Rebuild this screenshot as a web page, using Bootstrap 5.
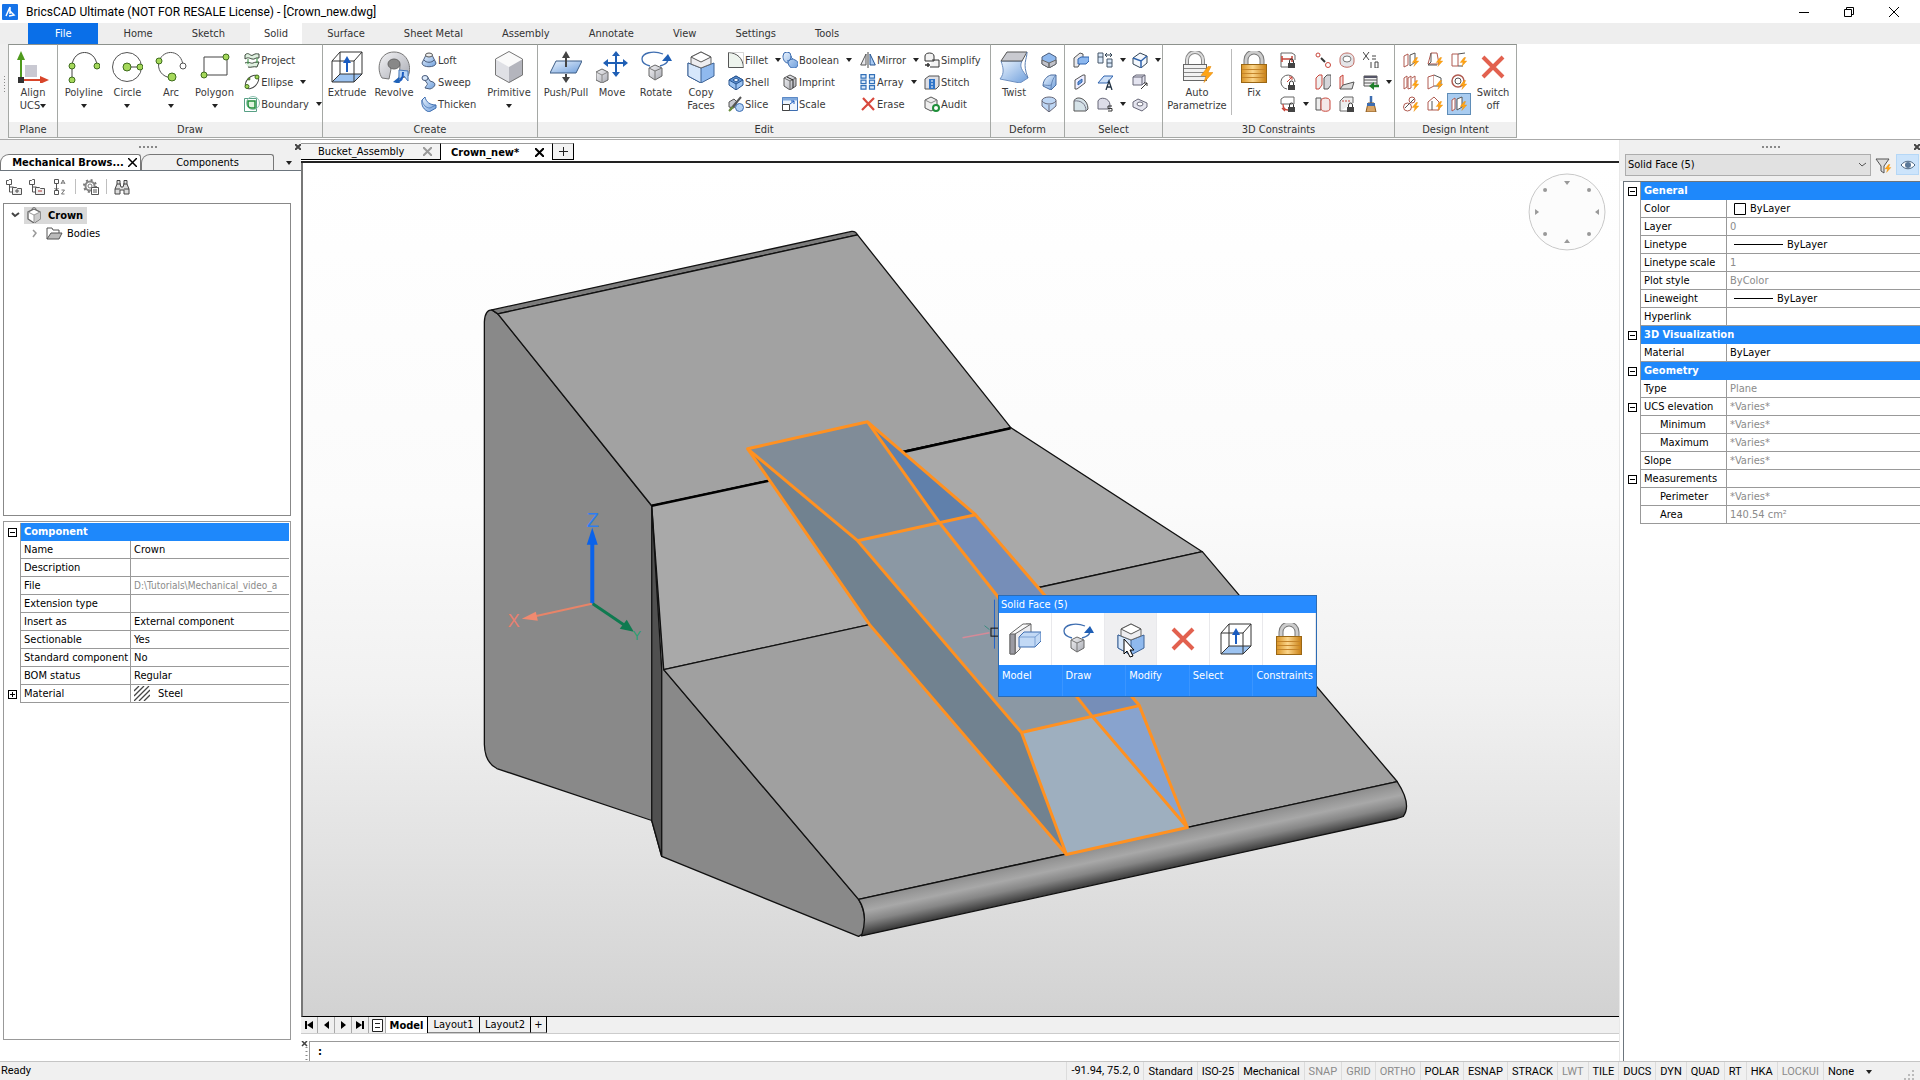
<!DOCTYPE html>
<html lang="en">
<head>
<meta charset="utf-8">
<meta name="viewport" content="width=device-width, initial-scale=1">
<title>BricsCAD Ultimate - Crown_new.dwg</title>
<link href="https://cdn.jsdelivr.net/npm/bootstrap@5.3.0/dist/css/bootstrap.min.css" rel="stylesheet">
<style>
:root{--ui:#f0f0f0;--accent:#1e88fb}
body{font-family:"DejaVu Sans Condensed","DejaVu Sans",sans-serif;font-size:11px;line-height:13px;color:#000;background:#fff}
svg{display:block;flex:none}
button,input,select{font:inherit;color:inherit}
.plain{border:0;background:none;padding:0}
.titlebar{height:23px;padding-left:2px;font-family:Roboto,"Noto Sans",sans-serif;font-size:12px;line-height:16px}
.winbtn{width:45px;height:22px}
.ribbon-tabs{height:21px;background:#eee;padding-left:28px;color:#333;gap:11px}
.ribbon-tab{padding:0 14px;color:#333;text-decoration:none;line-height:21px}
.ribbon-tab.active{background:#fff}
.ribbon-tab.filetab{padding:0 27px;background:#0a6fe8;color:#fff}
.ribbon-wrap{height:96px;background:#fff;border-bottom:1px solid #aaa;padding-left:8px;position:relative}
.ribbon-grip{left:0;top:0;bottom:0;width:8px;background:var(--ui)}
.rgroup{height:94px;border:1px solid #a5a8a5;border-top-color:#8d928d;border-left-width:0}
.rgroup:first-of-type{border-left-width:1px}
.rbody{flex:1;padding-top:4px;color:#3a3a3a}
.rlabel{height:15px;line-height:15px;background:var(--ui);text-align:center;color:#333}
.big{width:44px;display:flex;flex-direction:column;align-items:center;white-space:nowrap;padding-top:2px}
.big svg{width:32px;height:32px;margin-bottom:3px}
.caret{display:inline-block;width:0;height:0;border:3px solid transparent;border-top:4px solid #222;border-bottom:0;vertical-align:middle}
.big .caret{margin-top:5px}
.small-btn{height:22px;display:flex;align-items:center;gap:1px;white-space:nowrap;padding:0}
.small-btn .caret{margin-left:6px}
.small-btn svg,.ico svg{width:16px;height:16px}
.ico{width:24px;height:22px;display:flex;align-items:center;justify-content:center}
.ico.on{background:#a9ccf0;border:1px solid #5f8db8}
.cw{width:11px;height:22px;display:flex;align-items:center;justify-content:center}
.vsep{width:1px;height:66px;background:#bbb}
.w46{width:46px}.w48{width:48px}.w58{width:58px}.w60{width:60px}
.leftpane{width:301px;background:#fff}
.rightpane{width:301px;background:#fff;border-left:1px solid #e8e8e8}
.panehead{background:var(--ui)}
.grip{width:18px;height:2px;background:repeating-linear-gradient(90deg,#888 0 2px,transparent 2px 4px)}
.xmark{width:6px;height:6px}
.ptab{height:17px;border:1px solid #777;border-bottom:0;border-radius:9px 3px 0 0;line-height:16px;text-align:center;white-space:nowrap}
.ptools{height:33px;padding:0 0 1px 6px;gap:7px}
.tree{height:313px;border:1px solid #888;margin:0 10px 0 3px;padding-top:2px}
.treesel{background:#d9d9d9;padding:0 4px 0 2px;height:17px;gap:6px}
.propbox{flex:1;border:1px solid #999;margin:5px 10px 21px 3px;padding:1px 1px 0 0}
.proptable{table-layout:fixed;width:100%;border-collapse:separate;border-spacing:0}
.proptable td,.proptable th{height:18px;padding:0 0 0 3px;font-weight:400;border-bottom:1px solid #999;line-height:17px;white-space:nowrap;overflow:hidden}
.proptable td{border-left:1px solid #999}
.proptable .gut{padding:0 0 0 4px;border:0;border-right:1px solid #999}
.proptable .sec{background:var(--accent);color:#fff;font-weight:700;border-color:var(--accent)}
.proptable .sub{padding-left:19px}
.proptable .pathval{font-size:10px}
.dim{color:#8b8b8b}
.tog{width:9px;height:9px;border:1px solid #000;background:linear-gradient(#000,#000) center/5px 1px no-repeat;padding:0;display:block}
.tog.plus{background:linear-gradient(#000,#000) center/5px 1px no-repeat,linear-gradient(#000,#000) center/1px 5px no-repeat}
.doctabs{height:23px;padding:3px 0 1px;border-bottom:2px solid #222}
.doctab{border:1px solid #000;border-left:0;border-top-color:#999;background:#f3f3f3;line-height:15px;height:17px}
.viewport{flex:1;min-height:0;border-left:2px solid #777;border-bottom:1px solid #000;background:linear-gradient(#fff,#fbfbfb 40%,#f1f1f1 62%,#e1e1e1 82%,#d2d2d2);overflow:hidden}
.popup{left:695px;top:432px;width:319px;background:#278bff;border:1px solid #2c6cb5;color:#fff}
.popup .head{height:17px;line-height:17px;padding-left:2px}
.popup .cell{flex:1 1 0;height:52px;background:#fff;display:flex;align-items:center;justify-content:center;border-right:1px solid #e9e9ec}
.popup .cell.hot{background:#efeff1}
.popup .cell svg{width:32px;height:32px}
.popup .cat{flex:1 1 0;height:31px;padding:3px 0 0 3px;display:flex;align-items:flex-start;border-right:1px solid #3a95ff;line-height:15px;white-space:nowrap}
.laytabs{height:17px;background:var(--ui);border-bottom:1px solid #ccc}
.lnav{width:17px;height:16px;border-right:1px solid #aaa;display:flex;align-items:center;justify-content:center}
.ltab{height:16px;line-height:15px;border-right:1px solid #000;border-bottom:1px solid #888}
.cmdrow{height:27px;padding-top:7px}
.cmdbox{border:1px solid #999;border-right:0;border-bottom:0}
.cmdbox input{border:0;outline:0;background:none}
.statusbar{height:19px;background:var(--ui);border-top:1px solid #c5c5c5;font-family:Roboto,"Noto Sans",sans-serif;font-size:11px;line-height:17px;padding-left:1px}
.st{border:0;border-left:1px solid #dcdcdc;background:none;padding:0 4px;white-space:nowrap}
.selface{height:22px;background:#e1e1e1;border:1px solid #adadad;border-radius:0;padding:0 2px;appearance:none;line-height:18px}
.selwrap{position:relative;flex:1}
.selwrap svg{position:absolute;right:4px;top:8px;pointer-events:none}
.eyebtn{width:23px;height:21px;background:#cce4fb;border:1px solid #b5d7f6;display:flex;align-items:center;justify-content:center}
</style>
<script src="https://cdn.jsdelivr.net/npm/bootstrap@5.3.0/dist/js/bootstrap.bundle.min.js"></script>
</head>
<body class="vh-100 d-flex flex-column overflow-hidden">

<svg width="0" height="0" class="position-absolute" aria-hidden="true">
<defs>
<linearGradient id="gB" x1="0" y1="0" x2="1" y2="1"><stop offset="0" stop-color="#eaf3fd"/><stop offset="1" stop-color="#6f9fdc"/></linearGradient>
<linearGradient id="gG" x1="0" y1="0" x2="1" y2="1"><stop offset="0" stop-color="#f4f4f6"/><stop offset="1" stop-color="#a9abb3"/></linearGradient>
<linearGradient id="gY" x1="0" y1="0" x2="1" y2="0"><stop offset="0" stop-color="#d99324"/><stop offset=".45" stop-color="#fbd58a"/><stop offset="1" stop-color="#c97f12"/></linearGradient>
<linearGradient id="cyl" gradientUnits="userSpaceOnUse" x1="1120" y1="843" x2="1128" y2="880"><stop offset="0" stop-color="#8e8e8e"/><stop offset=".35" stop-color="#a8a8a8"/><stop offset=".62" stop-color="#868686"/><stop offset="1" stop-color="#2f2f2f"/></linearGradient>

<symbol id="ucs" viewBox="0 0 32 32"><rect x="8" y="14" width="12" height="12" fill="#c9c9d2"/><path d="M4 29V7" stroke="#4f9a1d" stroke-width="2"/><path d="M0 9L4 0l4 9z" fill="#4f9a1d"/><path d="M5 29h20" stroke="#d8452a" stroke-width="2"/><path d="M23 25l9 4-9 4z" fill="#d8452a"/><rect x="1" y="26" width="6" height="6" fill="#333"/></symbol>
<symbol id="polyline" viewBox="0 0 32 32"><path d="M4 30V15C5-3 28-3 29 15" fill="none" stroke="#444"/><g fill="#a5d85a" stroke="#3f6d1d"><circle cx="4" cy="29" r="3"/><circle cx="4" cy="15" r="3"/><circle cx="29" cy="15" r="3"/></g></symbol>
<symbol id="circle" viewBox="0 0 32 32"><circle cx="16" cy="16" r="14.500" fill="none" stroke="#555"/><path d="M16 16h14" stroke="#444"/><g fill="#a5d85a" stroke="#3f6d1d"><circle cx="16" cy="16" r="4"/><circle cx="29" cy="16" r="3"/></g></symbol>
<symbol id="arc" viewBox="0 0 32 32"><path d="M4 10C9-3 27-1 28 15M4 10c-2 8 2 16 13 17" fill="none" stroke="#555"/><g fill="#a5d85a" stroke="#3f6d1d"><circle cx="4" cy="10" r="3"/><circle cx="17" cy="26" r="4"/></g><circle cx="28" cy="15" r="3" fill="#fff" stroke="#555"/></symbol>
<symbol id="polygon" viewBox="0 0 32 32"><path d="M5 6h23v18H5z" fill="#fff" stroke="#444"/><g fill="#a5d85a" stroke="#3f6d1d"><circle cx="27" cy="6" r="3"/><circle cx="5" cy="24" r="3"/></g></symbol>
<symbol id="extrude" viewBox="0 0 32 32"><path d="M1 31l8-8h22l-8 8z" fill="#9cc3f1"/><path d="M1 10L9 1h22v22l-8 8H1zM1 10h22v21M23 10l8-9M9 1v22M9 23h22M1 31l8-8" fill="none" stroke="#333"/><path d="M16 21V11" stroke="#1b5cc0" stroke-width="2"/><path d="M12 12l4-7 4 7z" fill="#1b5cc0"/></symbol>
<symbol id="revolve" viewBox="0 0 32 32"><path d="M4 27C-2 18 1 1 16 1s18 17 14 24l-9 3 1-14c-3-7-12-3-9 4l-2 10z" fill="url(#gG)" stroke="#777"/><ellipse cx="16" cy="13" rx="6" ry="5" fill="#888" stroke="#666"/><path d="M21 19l9 1v10l-4-5-5 3z" fill="#b9d5f6" stroke="#4778b8"/><path d="M25 21c0 6-2 9-5 9" stroke="#1b5cc0" fill="none" stroke-width="2"/><path d="M21 26l-6 5 7 2z" fill="#1f62b8"/></symbol>
<symbol id="cubeG" viewBox="0 0 32 32"><path d="M16 0l14 8-14 8L2 8z" fill="#fafafa"/><path d="M2 8l14 8v16L2 24z" fill="#dfe0e5"/><path d="M30 8l-14 8v16l14-8z" fill="#b4b5bd"/><path d="M16 .5L29.500 8v16L16 31.500 2.500 24V8z" fill="none" stroke="#777"/></symbol>
<symbol id="pushpull" viewBox="0 0 32 32"><path d="M6 10h26l-6 12H0z" fill="url(#gB)" stroke="#3c5c85"/><path d="M16 7v9M16 23v5" stroke="#444" stroke-width="2"/><path d="M12 7l4-7 4 7zM12 26l4 6 4-6z" fill="#444"/></symbol>
<symbol id="move" viewBox="0 0 32 32"><g stroke="#1f5fb5" stroke-width="2"><path d="M20 3v20M10 12h20"/></g><path d="M16 5l4-5 4 5zM16 21l4 5 4-5zM12 8l-5 4 5 4zM27 8l5 4-5 4z" fill="#1f5fb5"/><path d="M6 18l6 3v8l-6 3-6-3v-8z" fill="url(#gG)" stroke="#666"/><path d="M0 21l6 3 6-3M6 24v8" stroke="#888" fill="none"/></symbol>
<symbol id="rotate" viewBox="0 0 32 32"><path d="M23 3C13-1 2 2 2 8c0 4 4 6 8 7M28 8c0 4-4 6-8 7" fill="none" stroke="#3d6db0" stroke-width="1.300"/><path d="M22 10l10 0-4-7z" fill="#1f5fb5"/><path d="M9 17l6-3 7 3v8l-7 4-6-4z" fill="url(#gG)" stroke="#666"/><path d="M9 17l6 3 7-3M15 20v9" stroke="#777" fill="none"/></symbol>
<symbol id="copyf" viewBox="0 0 32 32"><path d="M3 12l13 5 13-5v13l-13 7-13-7z" fill="#8fb9ee" stroke="#3c6296"/><path d="M3 12l13 5v15L3 25z" fill="#d6e7fb" stroke="#3c6296"/><path d="M6 6l10-5 10 5v7l-10 4-10-4z" fill="#ededf0" stroke="#666"/><path d="M16 1l10 5-10 5L6 6z" fill="#fff" stroke="#555"/></symbol>
<symbol id="twist" viewBox="0 0 32 32"><path d="M3 10h21c-3 6 0 9 6 17l-8 5L2 28c5-6 3-12 1-18z" fill="url(#gB)" stroke="#6d8fc0"/><path d="M3 10L9 1h20l-5 9z" fill="#c9cad0" stroke="#555"/><path d="M29 1c0 8-5 11 1 26" fill="none" stroke="#5a7eb2"/></symbol>
<symbol id="bolt" viewBox="0 0 16 16"><path d="M9 0L2 9h5l-2 7 9-10H9l3-6z" fill="#ffa414" stroke="#e08300" stroke-width=".5"/></symbol>
<symbol id="lockG" viewBox="0 0 32 32"><path d="M6 14V9a8 8 0 0 1 16 0v5" fill="none" stroke="#888" stroke-width="4"/><path d="M6 14V9a8 8 0 0 1 16 0v5" fill="none" stroke="#ddd" stroke-width="2"/><rect x="2.500" y="13.500" width="23" height="16" fill="#f2f2f2" stroke="#666"/><path d="M3 17.500h22M3 21.500h22M3 25.500h22" stroke="#888"/><use href="#bolt" x="18" y="15" width="16" height="17"/></symbol>
<symbol id="lockY" viewBox="0 0 32 32"><path d="M8 14V9a8 8 0 0 1 16 0v5" fill="none" stroke="#777" stroke-width="5"/><path d="M8 14V9a8 8 0 0 1 16 0v5" fill="none" stroke="#ccc" stroke-width="3"/><rect x="3.500" y="13.500" width="25" height="18" fill="url(#gY)" stroke="#9a6715"/><path d="M4 18.500h24M4 22.500h24M4 26.500h24" stroke="#c4842a"/></symbol>
<symbol id="xred" viewBox="0 0 32 32"><path d="M6 6l20 20M26 6L6 26" stroke="#e2614f" stroke-width="4"/></symbol>
<symbol id="modelI" viewBox="0 0 32 32"><path d="M6 11L17 1h5v11L11 22v4l-5 5z" fill="#ededf0" stroke="#666"/><path d="M1 11L14 1h8L6 11v20H1z" fill="#fafafa" stroke="#666"/><path d="M1 11h5v20H1z" fill="#9b9ba3" stroke="#666"/><path d="M10 14l5-5h17v9l-6 6H10z" fill="#c2d9f5" stroke="#3d6db0"/><path d="M10 14h16l6-5M26 14v10" fill="none" stroke="#5f8ac6" stroke-width=".7"/></symbol>

<symbol id="project" viewBox="0 0 16 16"><path d="M1 3c4-4 5 2 8 0s4-1 6-1v4c-4-1-4 2-7 1S4 5 1 7zM1 11c4-2 6 1 8 0s4-1 6-1l-2 5c-4-1-6 1-9 0" fill="#dff0e0" stroke="#3c4a3c"/><path d="M4 7v5M13 6v5" stroke="#2f8f3a"/></symbol>
<symbol id="ellipse" viewBox="0 0 16 16"><ellipse cx="8" cy="8" rx="8" ry="5" transform="rotate(-45 8 8)" fill="none" stroke="#444"/><g fill="#a5d85a" stroke="#3f6d1d"><circle cx="13" cy="3" r="2"/><circle cx="3" cy="12.500" r="2"/><circle cx="5" cy="5" r="1"/></g></symbol>
<symbol id="boundary" viewBox="0 0 16 16"><path d="M.5 2.500h12v13H.5z" fill="none" stroke="#57a085"/><circle cx="9" cy="7" r="6.500" fill="none" stroke="#8cbfae"/><path d="M4 5h7v7H7c-2 0-3-2-3-3z" fill="#dff4df" stroke="#1f8f3a" stroke-width="1.500"/></symbol>
<symbol id="loft" viewBox="0 0 16 16"><path d="M5 3l-4 8c0 5 14 5 14 0l-4-8z" fill="url(#gB)" stroke="#4a5d7d"/><ellipse cx="8" cy="3" rx="3.500" ry="2" fill="#eee" stroke="#555"/><path d="M3 8c2 3 8 3 10 0" fill="none" stroke="#4a5d7d"/></symbol>
<symbol id="sweep" viewBox="0 0 16 16"><path d="M2 4l4-2 3 5 3 1c4 2 1 6-3 7l-5-1c2-4 3-3 2-5z" fill="url(#gB)" stroke="#4a5d7d"/><ellipse cx="4" cy="4" rx="3" ry="2.500" fill="#dceafb" stroke="#4a5d7d"/></symbol>
<symbol id="thicken" viewBox="0 0 16 16"><path d="M1 4l3-3c1 5 5 8 11 8v3l-7 4C3 14 0 10 1 4z" fill="url(#gB)" stroke="#3d6db0"/><path d="M1 4c1 5 4 8 8 8l6-3" fill="none" stroke="#3d6db0" stroke-width=".7"/></symbol>
<symbol id="fillet" viewBox="0 0 16 16"><path d="M.5.500v15h15C15 6 9 1 .5.500z" fill="#eef4ee" stroke="#555"/><path d="M.5.500h15v15" fill="none" stroke="#bbb" stroke-width=".6"/></symbol>
<symbol id="shell" viewBox="0 0 16 16"><path d="M8 2l7 4v5l-7 5-7-5V6z" fill="#9cc3f1" stroke="#28558f"/><path d="M1 6l7 4 7-4-7-4zM8 10v6" fill="#5e93d5" stroke="#28558f"/><path d="M5 6l3-2 3 2-3 2z" fill="#eaf3fd" stroke="#28558f"/></symbol>
<symbol id="slice" viewBox="0 0 16 16"><path d="M1 6l5-3 3 3-3 6-5-1z" fill="#c9cad0" stroke="#555"/><circle cx="11.500" cy="11.500" r="4" fill="#b5d2f5" stroke="#3d6db0"/><path d="M2 14L13 1" stroke="#555" stroke-width="2"/><path d="M1 15l4-4" stroke="#6a8f3c" stroke-width="2"/></symbol>
<symbol id="boolean" viewBox="0 0 16 16"><path d="M1 4a4 4 0 0 1 8 0c0 2 2 3 4 4a4 4 0 0 1-2 8c-3 0-4-2-5-5-3 0-5-3-5-7z" fill="url(#gB)" stroke="#3d6db0"/><path d="M9 4c0 3-1 5-4 5M6 11c0-2 2-4 5-4" fill="none" stroke="#3d6db0"/></symbol>
<symbol id="cubeS" viewBox="0 0 16 16"><path d="M8 1l6 3v8l-6 4-6-4V4z" fill="url(#gG)" stroke="#555"/><path d="M2 4l6 3 6-3M8 7v8" fill="none" stroke="#666"/></symbol>
<symbol id="compcube" viewBox="0 0 16 16"><circle cx="8" cy="2.500" r="2" fill="#fff" stroke="#777"/><path d="M8 2l6 3v7l-6 4-6-4V5z" fill="#fff" stroke="#666" stroke-width="1.300"/><path d="M14 5v7l-6 4V8z" fill="#ccc"/><path d="M2 5l6 3 6-3M8 8v7" fill="none" stroke="#999"/></symbol>
<symbol id="imprint" viewBox="0 0 16 16"><use href="#cubeS"/><path d="M5 3l6 3v8" fill="none" stroke="#222"/></symbol>
<symbol id="scale" viewBox="0 0 16 16"><path d="M.5 1.500h15v13H.5z" fill="#eef5fd" stroke="#3d6db0"/><path d="M.5 1.500h15v3H.5z" fill="#7fa9dd"/><path d="M.5 8.500h7v6h-7z" fill="#fff" stroke="#444"/><path d="M8 8l4-3M12 8V5H9" stroke="#1b5cc0" fill="none"/></symbol>
<symbol id="mirror" viewBox="0 0 16 16"><path d="M6 2v11H.7z" fill="#e6e6ea" stroke="#555"/><path d="M10 2v11h5.300z" fill="#a9cbf4" stroke="#28558f"/><path d="M8 0v16" stroke="#444"/></symbol>
<symbol id="array" viewBox="0 0 16 16"><g fill="#dbeafb" stroke="#3270b8" stroke-width="1.200"><path d="M1 .7h5v3.500H1zM9.500.700h5v3.500h-5zM1 6.200h5v3.500H1zM9.500 6.200h5v3.500h-5zM1 11.700h5v3.500H1zM9.500 11.700h5v3.500h-5z"/></g></symbol>
<symbol id="erase" viewBox="0 0 16 16"><path d="M3 2l11 12M14 2L2 14" stroke="#d8483d" stroke-width="2.200"/></symbol>
<symbol id="simplify" viewBox="0 0 16 16"><path d="M1 9V4c0-4 9-4 9 0v5zM8 8h7v7H6" fill="#f3f3f3" stroke="#333"/><path d="M1 13h5M4 11v4" stroke="#333" stroke-width="1.500"/></symbol>
<symbol id="stitch" viewBox="0 0 16 16"><path d="M1 5l4-3h10v10l-3 3H1z" fill="#dedfe5" stroke="#555"/><path d="M5 5h6v10H5z" fill="#2f74c8"/><path d="M8 6v9" stroke="#fff" stroke-dasharray="2 1"/></symbol>
<symbol id="audit" viewBox="0 0 16 16"><path d="M7 1l6 3v8l-6 3-6-3V4z" fill="#eee" stroke="#555"/><path d="M1 4l6 3 6-3" fill="none" stroke="#888"/><circle cx="12" cy="12" r="3" fill="#fff" stroke="#1f8f3a" stroke-width="2"/></symbol>
<symbol id="d1" viewBox="0 0 16 16"><path d="M8 1l7 4v7l-7 4-7-4V5z" fill="#8fb9ee" stroke="#4a5d7d"/><path d="M1 8l7 3v5l-7-4zM8 11l7-3v4l-7 4z" fill="#c1c2ca" stroke="#666"/></symbol>
<symbol id="d2" viewBox="0 0 16 16"><path d="M15 1v10l-5 5-8-4C2 6 6 2 10 1z" fill="url(#gB)" stroke="#4a6da0"/><path d="M15 1c-3 3-5 8-5 15M2 11c3 0 6 1 8 0" fill="none" stroke="#4a6da0" stroke-width=".7"/></symbol>
<symbol id="d3" viewBox="0 0 16 16"><path d="M1 4c2-4 12-4 14 0v6l-7 6-7-6z" fill="#bdd6f4" stroke="#667"/><path d="M1 5c3 4 11 4 14 0M8 9v7" fill="none" stroke="#667"/></symbol>
<symbol id="s1" viewBox="0 0 16 16"><path d="M1 6l6-5 3 1v4l-5 9H1z" fill="#e8e8ec" stroke="#555"/><path d="M5 7l3-2h8v4l-3 3H5z" fill="#8db8ef" stroke="#2f63ad"/></symbol>
<symbol id="s2" viewBox="0 0 16 16"><path d="M2 6l8-5h2v8l-8 6H2z" fill="#eef" stroke="#555"/><path d="M5 8l4-3v3l-4 3z" fill="#6a9fe0" stroke="#2f63ad"/></symbol>
<symbol id="s3" viewBox="0 0 16 16"><path d="M1 15V5c2-6 14-3 14 8l-2 2z" fill="#d5e2e8" stroke="#555"/><path d="M1 5c7-1 12 3 12 10" fill="none" stroke="#778"/></symbol>
<symbol id="s4" viewBox="0 0 16 16"><path d="M1 1h5v10H1zM10 7h5v8h-5zM1 5h5M10 11h5" fill="#dbeafb" stroke="#456"/><path d="M8 3h7M10 1l-2 2 2 2M13 1l2 2-2 2" stroke="#345" fill="none"/></symbol>
<symbol id="s5" viewBox="0 0 16 16"><path d="M1 9l6-7h9l-6 7z" fill="#cfe1f8" stroke="#2f63ad"/><path d="M9 16l3-9 3 9M10 13h4" fill="none" stroke="#234" stroke-width="1.300"/></symbol>
<symbol id="s6" viewBox="0 0 16 16"><path d="M1 13V5c2-5 12-3 12 4v4z" fill="#dcdce8" stroke="#667"/><path d="M15 10h-4v2.500h4V15h-4" fill="none" stroke="#333"/></symbol>
<symbol id="s7" viewBox="0 0 16 16"><path d="M1 6l7-5 7 3v7l-6 5-8-4z" fill="#f4f8fd" stroke="#345"/><path d="M1 6l8 3 6-5M9 9v7" fill="none" stroke="#2f63ad" stroke-width="1.500"/></symbol>
<symbol id="s8" viewBox="0 0 16 16"><path d="M1 3l3-2h9v7l-3 3H1zM1 3h9v8M10 3l3-2" fill="#e4e4f0" stroke="#667"/><path d="M9 15l6-6M12 9h3v3" stroke="#333" fill="none"/></symbol>
<symbol id="s9" viewBox="0 0 16 16"><path d="M1 6l5-3 9 4v4l-5 4-9-4z" fill="#e4e4ee" stroke="#667"/><ellipse cx="8" cy="8" rx="3" ry="2" fill="#fff" stroke="#667"/></symbol>
<symbol id="k" viewBox="0 0 16 16"><path d="M9.500 11V9a2 2 0 0 1 4 0v2" fill="none" stroke="#333"/><path d="M8 11h7v5H8z" fill="#444"/></symbol>
<symbol id="c1" viewBox="0 0 16 16"><path d="M1 1h11l3 2v5M1 1v14h7" fill="none" stroke="#666"/><path d="M2 7h10M2 4v6M12 4v6" stroke="#c8453a" stroke-width="1.500"/><use href="#k"/></symbol>
<symbol id="c2" viewBox="0 0 16 16"><path d="M15 8A7 7 0 1 0 7 15" fill="none" stroke="#666"/><path d="M7 8l5-5M9 3h3v3" stroke="#c8453a" fill="none"/><use href="#k"/></symbol>
<symbol id="c3" viewBox="0 0 16 16"><path d="M1 3l3-2h10v7M1 3v5h11" fill="none" stroke="#666"/><path d="M3 8c0 4 2 6 5 6M2 12l3 3" stroke="#c8453a" fill="none" stroke-width="1.300"/><use href="#k"/></symbol>
<symbol id="c4" viewBox="0 0 16 16"><g fill="#fff" stroke="#c8453a"><circle cx="3" cy="3" r="2"/><circle cx="13" cy="13" r="2.500"/></g><path d="M6 6l4 4" stroke="#333" stroke-width="2"/></symbol>
<symbol id="c5" viewBox="0 0 16 16"><path d="M1 4l3-3h3v10l-3 4H1z" fill="#eee" stroke="#c8453a"/><path d="M9 4l3-3h4v10l-3 4H9z" fill="#d6d6da" stroke="#555"/></symbol>
<symbol id="c6" viewBox="0 0 16 16"><path d="M1 2h5v12H1z" fill="#eee" stroke="#555"/><path d="M6 5c0-4 9-4 9 0v8c0 3-9 3-9 0z" fill="#f4e8e8" stroke="#c8453a"/></symbol>
<symbol id="c7" viewBox="0 0 16 16"><path d="M1 7c0-8 14-8 14 0v3c0 7-14 7-14 0z" fill="#e5e5e8" stroke="#c06a62"/><ellipse cx="8" cy="7" rx="4" ry="3" fill="#fff" stroke="#777"/></symbol>
<symbol id="c8" viewBox="0 0 16 16"><path d="M1 3l3-2v11l-3 3z" fill="#f6dcd9" stroke="#c8453a"/><path d="M1 15l3-4 11-3-2 7z" fill="#ddd" stroke="#555"/></symbol>
<symbol id="c9" viewBox="0 0 16 16"><path d="M1 15V5l4-4h9v6M1 15h7" fill="#eee" stroke="#666"/><path d="M3 5h8" stroke="#c8453a" stroke-dasharray="2 1"/><use href="#k"/></symbol>
<symbol id="c10" viewBox="0 0 16 16"><path d="M0 0l6 8M6 0L0 8M9 4h4M9 7h4M8 10v6M15 10h-3v6h3z" fill="none" stroke="#444"/></symbol>
<symbol id="c11" viewBox="0 0 16 16"><path d="M1 2h13v10H1zM1 6h13M1 9h13" fill="#f3f3f3" stroke="#555"/><path d="M1 2h13v2H1z" fill="#556"/><path d="M16 12H9" stroke="#1f7f2a" stroke-width="2.500"/><path d="M11 8l-5 4 5 4z" fill="#1f7f2a"/></symbol>
<symbol id="c12" viewBox="0 0 16 16"><path d="M8 0v7" stroke="#3d6db0" stroke-width="2.500"/><path d="M5 7h6l2 9H3z" fill="#d9a566" stroke="#8b5a20"/><path d="M4 7h8v3H4z" fill="#3d6db0"/></symbol>
<symbol id="i1" viewBox="0 0 16 16"><path d="M1 4l4-2v11l-4 2z" fill="#fff" stroke="#b05a50"/><path d="M7 3l5-2v9l-5 4z" fill="#fff" stroke="#555"/><use href="#bolt" x="8" y="5" width="9" height="10"/></symbol>
<symbol id="i2" viewBox="0 0 16 16"><path d="M4 1h6l2 11H1z" fill="#fff" stroke="#b05a50"/><path d="M4 1v9l-3 3h9" fill="none" stroke="#555"/><use href="#bolt" x="8" y="5" width="9" height="10"/></symbol>
<symbol id="i3" viewBox="0 0 16 16"><path d="M1 2h6v12H1z" fill="#fff" stroke="#b05a50"/><path d="M7 2l7-1M7 14h5" stroke="#555"/><use href="#bolt" x="8" y="5" width="9" height="10"/></symbol>
<symbol id="i4" viewBox="0 0 16 16"><path d="M1 4l3-2v11l-3 2zM5 4l3-2v12l-3 1zM9 4l3-2v6" fill="#fff" stroke="#b05a50"/><use href="#bolt" x="8" y="6" width="9" height="10"/></symbol>
<symbol id="i5" viewBox="0 0 16 16"><path d="M1 3l6-2v11l-6 3z" fill="#fff" stroke="#b05a50"/><path d="M7 1l7 3v8l-7 0" fill="#fff" stroke="#555"/><use href="#bolt" x="8" y="6" width="9" height="10"/></symbol>
<symbol id="i6" viewBox="0 0 16 16"><circle cx="7" cy="7" r="6" fill="#fff" stroke="#b05a50" stroke-width="1.500"/><circle cx="7" cy="7" r="3" fill="none" stroke="#555"/><use href="#bolt" x="8" y="6" width="9" height="10"/></symbol>
<symbol id="i7" viewBox="0 0 16 16"><circle cx="4.500" cy="11" r="4" fill="#fff" stroke="#b05a50"/><circle cx="9" cy="4" r="3" fill="#fff" stroke="#b05a50"/><path d="M2 12l9-9" stroke="#555"/><use href="#bolt" x="8" y="6" width="9" height="10"/></symbol>
<symbol id="i8" viewBox="0 0 16 16"><path d="M1 6l6-5 5 5v8H1z" fill="#fff" stroke="#b05a50"/><path d="M5 5v9" stroke="#555"/><use href="#bolt" x="8" y="5" width="9" height="10"/></symbol>
<symbol id="i9" viewBox="0 0 16 16"><path d="M1 4l3-2v11l-3 2z" fill="#fff" stroke="#b05a50"/><path d="M6 3l5-2v10l-5 3z" fill="#fff" stroke="#555"/><use href="#bolt" x="8" y="5" width="9" height="10"/></symbol>

<symbol id="t1" viewBox="0 0 16 16"><path d="M.5 5.500V1.500h2l1-1h2v5zM3.500 6v7h4M3.500 8h4" fill="none" stroke="#555"/><path d="M6.500 8.500h4l1 1h4v6h-9z" fill="#eee" stroke="#555"/><path d="M9 12h4M11 10v4" stroke="#555"/></symbol>
<symbol id="t2" viewBox="0 0 16 16"><path d="M.5 5.500V1.500h2l1-1h2v5zM3.500 6v7h4M3.500 8h4" fill="none" stroke="#555"/><path d="M6.500 8.500h4l1 1h4v6h-9z" fill="#eee" stroke="#555"/><path d="M9 12h4" stroke="#a33"/></symbol>
<symbol id="t3" viewBox="0 0 16 16"><path d="M2.500.500h4v4h-4zM2.500 11.500h4v4h-4zM4.500 5v6M2.500 9l2 2 2-2" fill="none" stroke="#555"/><path d="M9 5l2-4 2 4M9.500 4h3M9.500 11h3l-3 4h3" fill="none" stroke="#555" stroke-width=".8"/></symbol>
<symbol id="t4" viewBox="0 0 16 16"><circle cx="7" cy="7" r="4.500" fill="none" stroke="#888" stroke-width="2"/><circle cx="7" cy="7" r="6" fill="none" stroke="#777" stroke-width="2" stroke-dasharray="2 2.700"/><circle cx="7" cy="7" r="2" fill="none" stroke="#777"/><path d="M8.500 8.500h7v7h-7zM10 11h4M10 13h4" fill="#fff" stroke="#555"/></symbol>
<symbol id="t5" viewBox="0 0 16 16"><path d="M1 15v-5l2-5V1.500h3V5l1 3h2l1-3V1.500h3V5l2 5v5h-5v-4H6v4z" fill="#ddd" stroke="#444"/><path d="M3 5h4M9 5h4M1 10h5M10 10h5" stroke="#444"/></symbol>
</defs>
</svg>

<header class="titlebar d-flex align-items-center">
  <svg width="16" height="16" viewBox="0 0 16 16"><rect width="16" height="16" rx="1" fill="#1673e8"/><path d="M8 3L4 12M8 3v7M8 7l4 4-5 1" stroke="#fff" fill="none" stroke-width="1.500"/></svg>
  <span class="ms-1 ps-1 me-auto">BricsCAD Ultimate (NOT FOR RESALE License) - [Crown_new.dwg]</span>
  <button class="plain winbtn d-flex align-items-center justify-content-center" aria-label="Minimize"><svg width="10" height="10"><path d="M0 5.500h10" stroke="#000"/></svg></button>
  <button class="plain winbtn d-flex align-items-center justify-content-center" aria-label="Restore"><svg width="10" height="10"><path d="M.5 2.500h7v7h-7zM2.500 2V.500h7v7H8" fill="none" stroke="#000"/></svg></button>
  <button class="plain winbtn d-flex align-items-center justify-content-center me-1" aria-label="Close"><svg width="10" height="10"><path d="M0 0l10 10M10 0L0 10" stroke="#000"/></svg></button>
</header>

<nav class="ribbon-tabs d-flex" aria-label="Ribbon tabs">
  <a class="ribbon-tab filetab" href="#">File</a><a class="ribbon-tab" href="#">Home</a><a class="ribbon-tab" href="#">Sketch</a><a class="ribbon-tab active" href="#">Solid</a><a class="ribbon-tab" href="#">Surface</a><a class="ribbon-tab" href="#">Sheet Metal</a><a class="ribbon-tab" href="#">Assembly</a><a class="ribbon-tab" href="#">Annotate</a><a class="ribbon-tab" href="#">View</a><a class="ribbon-tab" href="#">Settings</a><a class="ribbon-tab" href="#">Tools</a>
</nav>

<div class="ribbon-wrap d-flex">
  <div class="ribbon-grip position-absolute"><svg width="8" height="95"><path d="M4.500 32v18" stroke="#888" stroke-dasharray="1 2"/></svg></div>
  <section class="rgroup d-flex flex-column">
    <div class="rbody d-flex"><button class="plain big w48"><svg><use href="#ucs"/></svg>Align<span>UCS<i class="caret mt-0"></i></span></button></div>
    <div class="rlabel">Plane</div>
  </section>
  <section class="rgroup d-flex flex-column" style="width:265px">
    <div class="rbody d-flex ps-1">
      <button class="plain big"><svg><use href="#polyline"/></svg>Polyline<i class="caret"></i></button>
      <button class="plain big"><svg><use href="#circle"/></svg>Circle<i class="caret"></i></button>
      <button class="plain big"><svg><use href="#arc"/></svg>Arc<i class="caret"></i></button>
      <button class="plain big"><svg><use href="#polygon"/></svg>Polygon<i class="caret"></i></button>
      <div class="ms-2">
        <button class="plain small-btn"><svg><use href="#project"/></svg>Project</button>
        <button class="plain small-btn"><svg><use href="#ellipse"/></svg>Ellipse<i class="caret"></i></button>
        <button class="plain small-btn"><svg><use href="#boundary"/></svg>Boundary<i class="caret"></i></button>
      </div>
    </div>
    <div class="rlabel">Draw</div>
  </section>
  <section class="rgroup d-flex flex-column" style="width:215px">
    <div class="rbody d-flex">
      <button class="plain big w48"><svg><use href="#extrude"/></svg>Extrude</button>
      <button class="plain big w46"><svg><use href="#revolve"/></svg>Revolve</button>
      <div class="ms-1">
        <button class="plain small-btn"><svg><use href="#loft"/></svg>Loft</button>
        <button class="plain small-btn"><svg><use href="#sweep"/></svg>Sweep</button>
        <button class="plain small-btn"><svg><use href="#thicken"/></svg>Thicken</button>
      </div>
      <button class="plain big w48 ms-auto me-1"><svg><use href="#cubeG"/></svg>Primitive<i class="caret"></i></button>
    </div>
    <div class="rlabel">Create</div>
  </section>
  <section class="rgroup d-flex flex-column" style="width:453px">
    <div class="rbody d-flex ps-1">
      <button class="plain big w48"><svg><use href="#pushpull"/></svg>Push/Pull</button>
      <button class="plain big"><svg><use href="#move"/></svg>Move</button>
      <button class="plain big"><svg><use href="#rotate"/></svg>Rotate</button>
      <button class="plain big w46"><svg><use href="#copyf"/></svg>Copy<span>Faces</span></button>
      <div class="w58">
        <button class="plain small-btn ms-1"><svg><use href="#fillet"/></svg>Fillet<i class="caret"></i></button>
        <button class="plain small-btn ms-1"><svg><use href="#shell"/></svg>Shell</button>
        <button class="plain small-btn ms-1"><svg><use href="#slice"/></svg>Slice</button>
      </div>
      <div class="flex-fill">
        <button class="plain small-btn"><svg><use href="#boolean"/></svg>Boolean<i class="caret"></i></button>
        <button class="plain small-btn"><svg><use href="#imprint"/></svg>Imprint</button>
        <button class="plain small-btn"><svg><use href="#scale"/></svg>Scale</button>
      </div>
      <div class="w60 me-1">
        <button class="plain small-btn"><svg><use href="#mirror"/></svg>Mirror<i class="caret"></i></button>
        <button class="plain small-btn"><svg><use href="#array"/></svg>Array<i class="caret"></i></button>
        <button class="plain small-btn"><svg><use href="#erase"/></svg>Erase</button>
      </div>
      <div class="w58 me-2 pe-1">
        <button class="plain small-btn"><svg><use href="#simplify"/></svg>Simplify</button>
        <button class="plain small-btn"><svg><use href="#stitch"/></svg>Stitch</button>
        <button class="plain small-btn"><svg><use href="#audit"/></svg>Audit</button>
      </div>
    </div>
    <div class="rlabel">Edit</div>
  </section>
  <section class="rgroup d-flex flex-column" style="width:74px">
    <div class="rbody d-flex">
      <button class="plain big w46"><svg><use href="#twist"/></svg>Twist</button>
      <div>
        <button class="plain ico" aria-label="Deform move"><svg><use href="#d1"/></svg></button>
        <button class="plain ico" aria-label="Deform curve"><svg><use href="#d2"/></svg></button>
        <button class="plain ico" aria-label="Deform point"><svg><use href="#d3"/></svg></button>
      </div>
    </div>
    <div class="rlabel">Deform</div>
  </section>
  <section class="rgroup d-flex flex-column" style="width:98px">
    <div class="rbody d-flex ps-1">
      <div>
        <button class="plain ico" aria-label="Select protrusion"><svg><use href="#s1"/></svg></button>
        <button class="plain ico" aria-label="Select hole"><svg><use href="#s2"/></svg></button>
        <button class="plain ico" aria-label="Select blend"><svg><use href="#s3"/></svg></button>
      </div>
      <div>
        <button class="plain ico" aria-label="Select aligned"><svg><use href="#s4"/></svg></button>
        <button class="plain ico" aria-label="Select coplanar"><svg><use href="#s5"/></svg></button>
        <button class="plain ico" aria-label="Select smaller"><svg><use href="#s6"/></svg></button>
      </div>
      <div><span class="cw"><i class="caret"></i></span><span class="cw"></span><span class="cw"><i class="caret"></i></span></div>
      <div>
        <button class="plain ico" aria-label="Select box"><svg><use href="#s7"/></svg></button>
        <button class="plain ico" aria-label="Select edges"><svg><use href="#s8"/></svg></button>
        <button class="plain ico" aria-label="Select loop"><svg><use href="#s9"/></svg></button>
      </div>
      <div><span class="cw"><i class="caret"></i></span></div>
    </div>
    <div class="rlabel">Select</div>
  </section>
  <section class="rgroup d-flex flex-column" style="width:232px">
    <div class="rbody d-flex ps-1">
      <button class="plain big w60"><svg><use href="#lockG"/></svg>Auto<span>Parametrize</span></button>
      <div class="vsep ms-1"></div>
      <button class="plain big"><svg><use href="#lockY"/></svg>Fix</button>
      <div>
        <button class="plain ico" aria-label="Distance"><svg><use href="#c1"/></svg></button>
        <button class="plain ico" aria-label="Radius"><svg><use href="#c2"/></svg></button>
        <button class="plain ico" aria-label="Angle"><svg><use href="#c3"/></svg></button>
      </div>
      <div><span class="cw"></span><span class="cw"></span><span class="cw"><i class="caret"></i></span></div>
      <div>
        <button class="plain ico" aria-label="Coincident"><svg><use href="#c4"/></svg></button>
        <button class="plain ico" aria-label="Parallel"><svg><use href="#c5"/></svg></button>
        <button class="plain ico" aria-label="Tangent"><svg><use href="#c6"/></svg></button>
      </div>
      <div>
        <button class="plain ico" aria-label="Concentric"><svg><use href="#c7"/></svg></button>
        <button class="plain ico" aria-label="Perpendicular"><svg><use href="#c8"/></svg></button>
        <button class="plain ico" aria-label="Rigid set"><svg><use href="#c9"/></svg></button>
      </div>
      <div>
        <button class="plain ico" aria-label="Parameters"><svg><use href="#c10"/></svg></button>
        <button class="plain ico" aria-label="Design table"><svg><use href="#c11"/></svg></button>
        <button class="plain ico" aria-label="Clean"><svg><use href="#c12"/></svg></button>
      </div>
      <div><span class="cw"></span><span class="cw"><i class="caret"></i></span></div>
    </div>
    <div class="rlabel">3D Constraints</div>
  </section>
  <section class="rgroup d-flex flex-column" style="width:122px">
    <div class="rbody d-flex ps-1">
      <div>
        <button class="plain ico" aria-label="Intent coplanar"><svg><use href="#i1"/></svg></button>
        <button class="plain ico" aria-label="Intent parallel"><svg><use href="#i4"/></svg></button>
        <button class="plain ico" aria-label="Intent equal radius"><svg><use href="#i7"/></svg></button>
      </div>
      <div>
        <button class="plain ico" aria-label="Intent draft"><svg><use href="#i2"/></svg></button>
        <button class="plain ico" aria-label="Intent perpendicular"><svg><use href="#i5"/></svg></button>
        <button class="plain ico" aria-label="Intent symmetric"><svg><use href="#i8"/></svg></button>
      </div>
      <div>
        <button class="plain ico" aria-label="Intent tangent"><svg><use href="#i3"/></svg></button>
        <button class="plain ico" aria-label="Intent coaxial"><svg><use href="#i6"/></svg></button>
        <button class="plain ico on" aria-label="Intent on"><svg><use href="#i9"/></svg></button>
      </div>
      <button class="plain big"><svg><use href="#xred"/></svg>Switch<span>off</span></button>
    </div>
    <div class="rlabel">Design Intent</div>
  </section>
</div>

<main class="d-flex flex-fill" style="min-height:0">
  <aside class="leftpane d-flex flex-column flex-shrink-0">
    <div class="panehead">
      <div class="d-flex align-items-center pt-1"><div class="grip mx-auto"></div><svg class="xmark" viewBox="0 0 6 6"><path d="M0 0l6 6M6 0L0 6" stroke="#444" stroke-width="2"/></svg></div>
      <div class="d-flex align-items-center pt-1" style="height:20px">
        <div class="ptab bg-white fw-bold ps-2" style="width:141px">Mechanical Brows...<svg width="9" height="9" class="d-inline-block ms-1"><path d="M0 0l9 9M9 0L0 9" stroke="#000" stroke-width="1.500"/></svg></div>
        <div class="ptab" style="width:133px">Components</div>
        <button class="plain ms-2 ps-1" aria-label="Tab list"><i class="caret"></i></button>
      </div>
    </div>
    <div class="ptools border-top border-secondary d-flex align-items-center">
      <button class="plain" aria-label="Expand all"><svg width="16" height="16"><use href="#t1"/></svg></button>
      <button class="plain" aria-label="Collapse all"><svg width="16" height="16"><use href="#t2"/></svg></button>
      <button class="plain" aria-label="Sort"><svg width="16" height="16"><use href="#t3"/></svg></button>
      <div class="vr my-2"></div>
      <button class="plain" aria-label="Settings"><svg width="16" height="16"><use href="#t4"/></svg></button>
      <div class="vr my-2"></div>
      <button class="plain" aria-label="Find"><svg width="16" height="16"><use href="#t5"/></svg></button>
    </div>
    <div class="tree">
      <div class="d-flex align-items-center" style="height:18px;padding-left:7px"><svg width="9" height="6"><path d="M1 1l3 3 4-3" fill="none" stroke="#444" stroke-width="2"/></svg><div class="treesel d-flex align-items-center fw-bold ms-1"><svg width="16" height="16"><use href="#compcube"/></svg><span>Crown</span></div></div>
      <div class="d-flex align-items-center gap-1" style="height:18px;padding-left:28px"><svg width="6" height="9" class="me-1"><path d="M1 1l3 3-3 4" fill="none" stroke="#999" stroke-width="1.500"/></svg><svg width="17" height="13" viewBox="0 0 17 13"><path d="M1 12V1h5l1 2h6v3" fill="#fff" stroke="#555"/><path d="M1 12l4-6h11l-3 6z" fill="#bbb" stroke="#555"/></svg><span>Bodies</span></div>
    </div>
    <div class="propbox">
      <table class="proptable">
        <colgroup><col style="width:17px"><col style="width:109px"><col></colgroup>
        <tr><td class="gut"><button class="tog" aria-label="Collapse"></button></td><th class="sec" colspan="2">Component</th></tr>
        <tr><td class="gut"></td><th>Name</th><td>Crown</td></tr>
        <tr><td class="gut"></td><th>Description</th><td></td></tr>
        <tr><td class="gut"></td><th>File</th><td class="dim pathval">D:\Tutorials\Mechanical_video_a</td></tr>
        <tr><td class="gut"></td><th>Extension type</th><td></td></tr>
        <tr><td class="gut"></td><th>Insert as</th><td>External component</td></tr>
        <tr><td class="gut"></td><th>Sectionable</th><td>Yes</td></tr>
        <tr><td class="gut"></td><th>Standard component</th><td>No</td></tr>
        <tr><td class="gut"></td><th>BOM status</th><td>Regular</td></tr>
        <tr><td class="gut"><button class="tog plus" aria-label="Expand"></button></td><th>Material</th><td><div class="d-flex align-items-center gap-2"><svg width="16" height="15"><path d="M0 5l5-5M0 10L10 0M0 15L15 0M5 15L16 4M10 15l6-6" stroke="#444" stroke-width="1.300"/></svg>Steel</div></td></tr>
      </table>
    </div>
  </aside>

  <section class="d-flex flex-column flex-fill" style="min-width:0">
    <div class="doctabs d-flex">
      <div class="doctab d-flex align-items-center" style="width:140px;padding-left:17px">Bucket_Assembly<button class="plain ms-auto me-2" aria-label="Close tab"><svg width="9" height="9"><path d="M0 0l9 9M9 0L0 9" stroke="#999" stroke-width="2"/></svg></button></div>
      <div class="doctab bg-white border-bottom-0 fw-bold d-flex align-items-center" style="width:112px;padding-left:10px">Crown_new*<button class="plain ms-auto me-1 pe-1" aria-label="Close tab"><svg width="9" height="9"><path d="M0 0l9 9M9 0L0 9" stroke="#000" stroke-width="2"/></svg></button></div>
      <button class="plain doctab d-flex align-items-center justify-content-center" style="width:21px" aria-label="New tab"><svg width="9" height="9"><path d="M4.500 0v9M0 4.500h9" stroke="#222"/></svg></button>
    </div>
    <div class="viewport position-relative">
      <svg width="100%" height="100%" viewBox="303 163 1317 853" preserveAspectRatio="xMinYMin meet" role="img" aria-label="3D model of crown">
        <g stroke="#111" stroke-width="1.300" stroke-linejoin="round">
          <path d="M484.500 745V322Q485 310 492 310L498 314 652 506 664 670 859 900 Q868 915 864 934 L859 937 662 857 652 821 497 769Q485 763 484.500 745z" fill="#898989"/>
          <path d="M492 310L852 231.500Q856 231 858 235L498 314z" fill="#7c7c7c"/>
          <path d="M498 314L858 235 1011.500 428 652 506z" fill="#a2a2a2"/>
          <path d="M652 506L1011.500 428 1203 552 664 670z" fill="#a9a9a9"/>
          <path d="M664 670L1203 552 1398 782 859 900z" fill="#a0a0a0"/>
          <path d="M652 506L662 670V857L652 821z" fill="#505050"/>
          <path d="M859 900L1398 782Q1413 805 1404 817L1398 819 862 936.500Q869 915 859 900z" fill="url(#cyl)"/>
        </g>
        <path d="M652 506L769 481M905 452L1011 428.500" stroke="#000" stroke-width="2.500"/>
        <g>
          <path d="M748 449L868 422 940 523 858 541z" fill="#808c98"/>
          <path d="M868 422L976 515 940 523z" fill="#6080ab"/>
          <path d="M858 541L940 523 1093 717 1022 733z" fill="#8b98a4"/>
          <path d="M940 523L976 515 1140 706 1093 717z" fill="#768eb8"/>
          <path d="M748 449L858 541 1022 733 1067 855 870 625z" fill="#718290"/>
          <path d="M1022 733L1093 717 1188 828 1067 855z" fill="#9eafbf"/>
          <path d="M1093 717L1140 706 1188 828z" fill="#88a3ce"/>
        </g>
        <g fill="none" stroke="#ff9121" stroke-width="3" stroke-linejoin="round">
          <path d="M748 449L868 422 976 515 1140 706 1188 828 1067 855 870 625z"/>
          <path d="M748 449L858 541 1022 733 1067 855M868 422L940 523 1093 717 1188 828M858 541L976 515M1022 733L1140 706"/>
        </g>
        <path d="M592.500 604V540" stroke="#0a62ea" stroke-width="4"/><path d="M587 545l5.500-17 5.500 17z" fill="#0a62ea"/>
        <path d="M592 604L533 617" stroke="#e88468" stroke-width="2"/><path d="M522 619l14-7 2 9z" fill="#f08a70"/>
        <path d="M593 604l31 21" stroke="#0f7a50" stroke-width="3"/><path d="M634 632l-14-3 7-9z" fill="#0f7a50"/>
        <g font-family="Liberation Sans,sans-serif" text-anchor="middle"><text x="593" y="527" font-size="20" fill="#2d7ef0">Z</text><text x="514" y="627" font-size="18" fill="#e88070">X</text><text x="637" y="640" font-size="13" fill="#2aa070">Y</text></g>
        <path d="M995 600v49" stroke="#2262c8"/><path d="M963 638l27-5" stroke="#d58a98" stroke-width="1.500"/><rect x="991.500" y="628.500" width="9" height="8" fill="none" stroke="#111"/><path d="M985 626l5 4" stroke="#3c8c80"/>
        <circle cx="1568" cy="212" r="38" fill="#fcfcfc" stroke="#c8c8c8"/>
        <g fill="#999"><path d="M1565 181h6l-3 4zM1565 243h6l-3-4zM1536 209v6l4-3zM1600 209v6l-4-3z"/><circle cx="1546" cy="190" r="2"/><circle cx="1590" cy="190" r="2"/><circle cx="1546" cy="234" r="2"/><circle cx="1590" cy="234" r="2"/></g>
      </svg>
      <div class="popup position-absolute">
        <div class="head">Solid Face (5)</div>
        <div class="d-flex">
          <button class="plain cell" aria-label="Model"><svg><use href="#modelI"/></svg></button>
          <button class="plain cell" aria-label="Draw"><svg><use href="#rotate"/></svg></button>
          <button class="plain cell hot position-relative" aria-label="Modify"><svg><use href="#copyf"/></svg><svg class="position-absolute" style="left:18px;top:25px;width:12px;height:20px" viewBox="0 0 12 20"><path d="M1 1v15l3-3 3 6 3-1-3-6h4z" fill="#fff" stroke="#000"/></svg></button>
          <button class="plain cell" aria-label="Delete"><svg><use href="#xred"/></svg></button>
          <button class="plain cell" aria-label="Extrude"><svg><use href="#extrude"/></svg></button>
          <button class="plain cell" aria-label="Fix"><svg><use href="#lockY"/></svg></button>
        </div>
        <div class="d-flex"><button class="plain cat">Model</button><button class="plain cat">Draw</button><button class="plain cat">Modify</button><button class="plain cat">Select</button><button class="plain cat border-0">Constraints</button></div>
      </div>
    </div>
    <div class="laytabs d-flex">
      <button class="plain lnav" aria-label="First"><svg width="8" height="8"><path d="M1 0v8" stroke="#000" stroke-width="2"/><path d="M8 0L2 4l6 4z"/></svg></button>
      <button class="plain lnav" aria-label="Previous"><svg width="5" height="8"><path d="M5 0L0 4l5 4z"/></svg></button>
      <button class="plain lnav" aria-label="Next"><svg width="5" height="8"><path d="M0 0l5 4-5 4z"/></svg></button>
      <button class="plain lnav" aria-label="Last"><svg width="8" height="8"><path d="M7 0v8" stroke="#000" stroke-width="2"/><path d="M0 0l6 4-6 4z"/></svg></button>
      <button class="plain lnav" aria-label="Layout list"><svg width="11" height="13"><path d="M.5.500h10v12H.5zM3 4.500h5M3 8.500h5" fill="#fff" stroke="#222"/></svg></button>
      <button class="plain ltab bg-white fw-bold border-bottom-0" style="width:42px">Model</button>
      <button class="plain ltab" style="width:52px">Layout1</button>
      <button class="plain ltab" style="width:51px">Layout2</button>
      <button class="plain ltab" style="width:16px">+</button>
    </div>
    <div class="cmdrow d-flex">
      <svg width="8" height="20"><path d="M1 0l5 5M6 0L1 5" stroke="#444" stroke-width="1.500"/><path d="M5.500 6v13" stroke="#888" stroke-width="2" stroke-dasharray="1 3"/></svg>
      <div class="cmdbox flex-fill d-flex align-items-center"><label for="cmd" class="fw-bold ps-2">:</label><input id="cmd" class="flex-fill" type="text"></div>
    </div>
  </section>

  <aside class="rightpane d-flex flex-column flex-shrink-0">
    <div class="panehead pt-1" style="height:41px">
      <div class="d-flex align-items-center ps-2"><div class="grip mx-auto"></div><svg class="xmark" viewBox="0 0 6 6"><path d="M0 0l6 6M6 0L0 6" stroke="#444" stroke-width="2"/></svg></div>
      <div class="d-flex gap-1" style="padding:4px 1px 0 5px">
        <div class="selwrap"><select class="selface w-100" aria-label="Selection"><option>Solid Face (5)</option></select><svg width="9" height="6"><path d="M1 1l3 3 4-3" fill="none" stroke="#555"/></svg></div>
        <button class="plain" aria-label="Quick select"><svg width="17" height="17" viewBox="0 0 17 17"><path d="M1 2h13L9 9v7l-3-2V9z" fill="#ddd" stroke="#555"/><use href="#bolt" x="9" y="7" width="8" height="9"/></svg></button>
        <button class="plain eyebtn" aria-label="Toggle preview"><svg width="16" height="10" viewBox="0 0 16 10"><path d="M1 5c4-5 10-5 14 0-4 5-10 5-14 0z" fill="#fff" stroke="#4a6480"/><circle cx="8" cy="5" r="3" fill="#5a7898"/></svg></button>
      </div>
    </div>
    <div class="flex-fill border-top border-start border-secondary" style="margin-left:3px">
      <table class="proptable">
        <colgroup><col style="width:17px"><col style="width:85px"><col></colgroup>
        <tr><td class="gut"><button class="tog" aria-label="Collapse"></button></td><th class="sec" colspan="2">General</th></tr>
        <tr><td class="gut"></td><th>Color</th><td><div class="d-flex align-items-center gap-1 ps-1"><svg width="12" height="12"><path d="M.5.500h11v11H.5z" fill="#fff" stroke="#000"/></svg>ByLayer</div></td></tr>
        <tr><td class="gut"></td><th>Layer</th><td class="dim">0</td></tr>
        <tr><td class="gut"></td><th>Linetype</th><td><div class="d-flex align-items-center gap-1 ps-1"><svg width="49" height="1"><path d="M0 .500h49" stroke="#000"/></svg>ByLayer</div></td></tr>
        <tr><td class="gut"></td><th>Linetype scale</th><td class="dim">1</td></tr>
        <tr><td class="gut"></td><th>Plot style</th><td class="dim">ByColor</td></tr>
        <tr><td class="gut"></td><th>Lineweight</th><td><div class="d-flex align-items-center gap-1 ps-1"><svg width="39" height="1"><path d="M0 .500h39" stroke="#000"/></svg>ByLayer</div></td></tr>
        <tr><td class="gut"></td><th>Hyperlink</th><td></td></tr>
        <tr><td class="gut"><button class="tog" aria-label="Collapse"></button></td><th class="sec" colspan="2">3D Visualization</th></tr>
        <tr><td class="gut"></td><th>Material</th><td>ByLayer</td></tr>
        <tr><td class="gut"><button class="tog" aria-label="Collapse"></button></td><th class="sec" colspan="2">Geometry</th></tr>
        <tr><td class="gut"></td><th>Type</th><td class="dim">Plane</td></tr>
        <tr><td class="gut"><button class="tog" aria-label="Collapse"></button></td><th>UCS elevation</th><td class="dim">*Varies*</td></tr>
        <tr><td class="gut"></td><th class="sub">Minimum</th><td class="dim">*Varies*</td></tr>
        <tr><td class="gut"></td><th class="sub">Maximum</th><td class="dim">*Varies*</td></tr>
        <tr><td class="gut"></td><th>Slope</th><td class="dim">*Varies*</td></tr>
        <tr><td class="gut"><button class="tog" aria-label="Collapse"></button></td><th>Measurements</th><td></td></tr>
        <tr><td class="gut"></td><th class="sub">Perimeter</th><td class="dim">*Varies*</td></tr>
        <tr><td class="gut"></td><th class="sub">Area</th><td class="dim">140.54 cm²</td></tr>
      </table>
    </div>
  </aside>
</main>

<footer class="statusbar d-flex">
  <span class="me-auto">Ready</span>
  <span class="st">-91.94, 75.2, 0</span><button class="st">Standard</button><button class="st">ISO-25</button><button class="st">Mechanical</button><button class="st dim">SNAP</button><button class="st dim">GRID</button><button class="st dim">ORTHO</button><button class="st">POLAR</button><button class="st">ESNAP</button><button class="st">STRACK</button><button class="st dim">LWT</button><button class="st">TILE</button><button class="st">DUCS</button><button class="st">DYN</button><button class="st">QUAD</button><button class="st">RT</button><button class="st">HKA</button><button class="st dim">LOCKUI</button><button class="st">None</button>
  <button class="plain px-2" aria-label="Status menu"><i class="caret"></i></button>
  <svg class="ms-4 mt-2 me-1" width="12" height="10"><g fill="#bbb"><path d="M8 0h2v2H8zM4 4h2v2H4zM8 4h2v2H8zM0 8h2v2H0zM4 8h2v2H4zM8 8h2v2H8z"/></g></svg>
</footer>
</body>
</html>
